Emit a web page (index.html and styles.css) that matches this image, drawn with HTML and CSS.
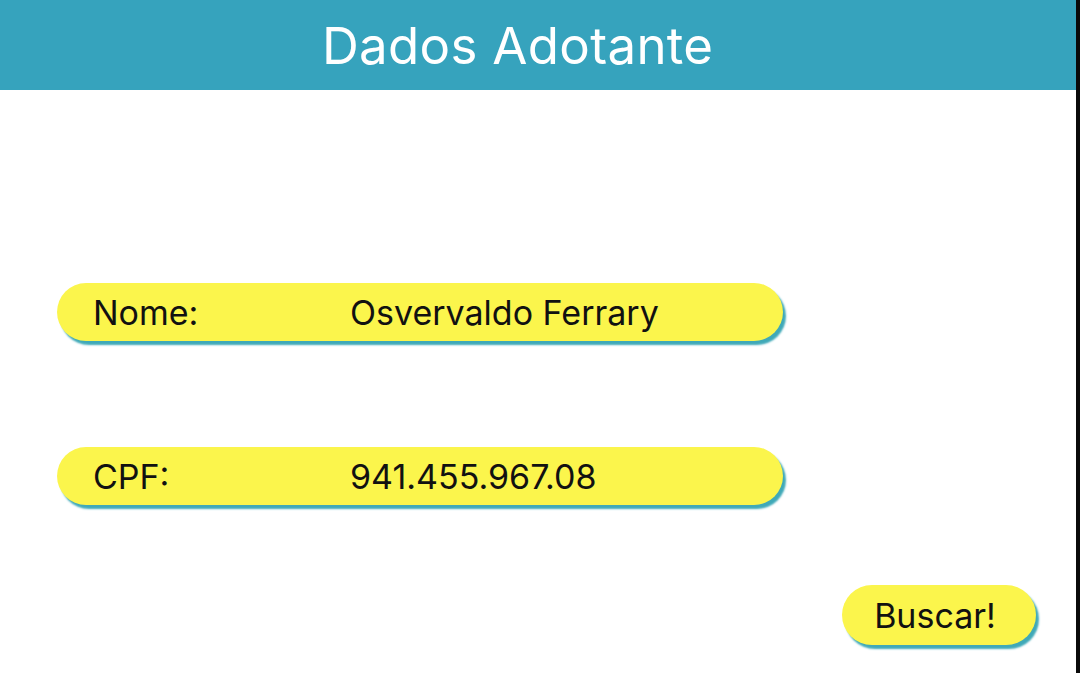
FILE: index.html
```html
<!DOCTYPE html>
<html lang="pt">
<head>
<meta charset="utf-8">
<title>Dados Adotante</title>
<link rel="stylesheet" href="styles.css">
</head>
<body>
<div class="screen">
  <header class="topbar">
    <h1 class="title">Dados Adotante</h1>
  </header>
  <main class="content">
    <div class="field field-nome">
      <span class="label">Nome:</span>
      <span class="value">Osvervaldo Ferrary</span>
    </div>
    <div class="field field-cpf">
      <span class="label">CPF:</span>
      <span class="value">941.455.967.08</span>
    </div>
    <div class="actions">
      <button class="btn">Buscar!</button>
    </div>
  </main>
</div>
</body>
</html>
```

FILE: styles.css
```css
html, body {
  margin: 0;
  padding: 0;
  height: 100%;
  background: #ffffff;
}
body {
  font-family: Inter, "Noto Sans", sans-serif;
  color: #111111;
}
.screen {
  width: 1076px;
  height: 673px;
  border-right: 4px solid #0a0a0a;
  display: flex;
  flex-direction: column;
  background: #ffffff;
}
.topbar {
  height: 90px;
  background: #36a3bd;
  display: flex;
  align-items: center;
  padding-left: 322px;
  box-sizing: border-box;
}
.title {
  margin: 0;
  font-weight: 400;
  font-size: 51px;
  color: #ffffff;
  line-height: 1;
  letter-spacing: 0.3px;
}
.content {
  flex: 1;
  display: flex;
  flex-direction: column;
  padding: 193px 40px 0 57px;
}
.field {
  width: 726px;
  height: 58px;
  box-sizing: border-box;
  background: #fbf54c;
  border-radius: 29px;
  box-shadow: 3px 4px 2px #3fa9b8;
  display: flex;
  align-items: center;
  padding-left: 36px;
  font-size: 34px;
}
.field-cpf {
  margin-top: 106px;
}
.label {
  width: 257px;
  flex: none;
}
.value {
  white-space: nowrap;
}
.actions {
  display: flex;
  justify-content: flex-end;
  margin-top: 80px;
}
.btn {
  width: 194px;
  height: 60px;
  border: none;
  border-radius: 30px;
  background: #fbf54c;
  box-shadow: 3px 4px 2px #3fa9b8;
  font-family: Inter, "Noto Sans", sans-serif;
  font-size: 34px;
  color: #111111;
  padding: 0 8px 0 0;
  cursor: pointer;
}
```
